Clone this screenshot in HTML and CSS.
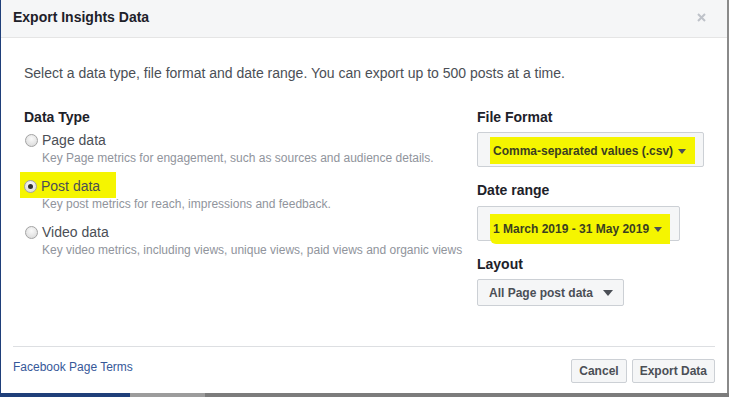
FILE: index.html
```html
<!DOCTYPE html>
<html>
<head>
<meta charset="utf-8">
<link rel="stylesheet" href="styles.css">
</head>
<body>
<div class="dialog">
  <div class="header">
    <span class="title">Export Insights Data</span>
    <svg class="close" width="9" height="9" viewBox="0 0 9 9"><path d="M1 1L8 8M8 1L1 8" stroke="#bec2c9" stroke-width="2"/></svg>
  </div>
  <div class="body">
    <p class="intro">Select a data type, file format and date range. You can export up to 500 posts at a time.</p>
    <div class="cols">
      <div class="col-left">
        <div class="heading">Data Type</div>
        <div class="option">
          <div class="opt-row"><span class="radio"></span><span class="label">Page data</span></div>
          <div class="desc">Key Page metrics for engagement, such as sources and audience details.</div>
        </div>
        <div class="option">
          <div class="opt-row"><span class="hl hl-post"><span class="radio checked"></span><span class="label">Post data</span></span></div>
          <div class="desc">Key post metrics for reach, impressions and feedback.</div>
        </div>
        <div class="option">
          <div class="opt-row"><span class="radio"></span><span class="label">Video data</span></div>
          <div class="desc">Key video metrics, including views, unique views, paid views and organic views</div>
        </div>
      </div>
      <div class="col-right">
        <div class="heading">File Format</div>
        <div class="select tall sel-format"><span class="hl hl-format">Comma-separated values (.csv)<span class="arrow small"></span></span></div>
        <div class="heading gap">Date range</div>
        <div class="select tall sel-date"><span class="hl hl-date">1 March 2019 - 31 May 2019<span class="arrow small"></span></span></div>
        <div class="heading gap">Layout</div>
        <div class="select short">All Page post data<span class="arrow"></span></div>
      </div>
    </div>
  </div>
  <div class="divider"></div>
  <div class="footer">
    <a class="terms" href="#">Facebook Page Terms</a>
    <div class="buttons">
      <button class="btn">Cancel</button>
      <button class="btn">Export Data</button>
    </div>
  </div>
</div>
</body>
</html>
```
FILE: styles.css
```css
html, body {
  margin: 0;
  padding: 0;
}
body {
  width: 729px;
  height: 397px;
  overflow: hidden;
  background: linear-gradient(to right, #1f3f7a 0 130px, #9c9c9c 130px 205px, #7c7c7c 205px);
  font-family: "Liberation Sans", Arial, sans-serif;
}
.dialog {
  width: 726px;
  height: 393px;
  margin-left: 1px;
  background: #fff;
  border-right: 2px solid #8a8a8a;
  box-sizing: content-box;
  display: flex;
  flex-direction: column;
}
.header {
  height: 37px;
  background: #f5f6f7;
  border-bottom: 1px solid #e5e5e5;
  display: flex;
  align-items: center;
  justify-content: space-between;
  padding: 0 21px 0 12px;
}
.title {
  font-size: 14px;
  font-weight: bold;
  color: #1d2129;
  margin-top: -3px;
}
.close {
  margin-top: -2px;
}
.body {
  height: 308px;
  padding: 0 0 0 23px;
  box-sizing: border-box;
}
.intro {
  margin: 26px 0 0;
  font-size: 14px;
  line-height: 18px;
  color: #4b4f56;
}
.cols {
  display: grid;
  grid-template-columns: 453px 1fr;
  margin-top: 26px;
}
.heading {
  font-size: 14px;
  font-weight: bold;
  line-height: 18px;
  color: #1d2129;
}
.heading.gap {
  margin-top: 14px;
}
.option {
  margin-top: 10px;
}
.col-left .heading + .option {
  margin-top: 5px;
}
.opt-row {
  display: flex;
  align-items: center;
  height: 18px;
}
.radio {
  width: 11px;
  height: 11px;
  border-radius: 50%;
  border: 1px solid #a3a3a3;
  background: radial-gradient(circle at 50% 35%, #fafafa, #d6d6d6);
  margin: 0 4px 0 1px;
  position: relative;
  flex: none;
}
.radio.checked::after {
  content: "";
  position: absolute;
  left: 3px;
  top: 3px;
  width: 5px;
  height: 5px;
  border-radius: 50%;
  background: #333;
}
.label {
  font-size: 14px;
  color: #4b4f56;
  line-height: 18px;
}
.desc {
  font-size: 12px;
  color: #90949c;
  line-height: 18px;
  padding-left: 18px;
  white-space: nowrap;
}
.hl {
  background: #f5f500;
}
.hl-post {
  display: inline-flex;
  align-items: center;
  padding: 5px 16px 3px 4px;
  margin: -5px 0 -3px -4px;
}
.hl-post .radio {
  margin-left: 0;
}
.select {
  background: #f5f6f7;
  border: 1px solid #ccd0d5;
  border-radius: 2px;
  font-size: 12px;
  font-weight: bold;
  color: #4b4f56;
  display: flex;
  align-items: center;
  box-sizing: border-box;
  margin-top: 6px;
}
.select.tall {
  height: 35px;
}
.select.short {
  height: 27px;
  width: 147px;
  padding-left: 11px;
  margin-top: 6px;
}
.sel-format {
  width: 227px;
  padding-left: 12px;
  margin-top: 6px;
}
.sel-date {
  width: 203px;
  padding-left: 12px;
  margin-top: 7px;
}
.hl-format {
  display: inline-flex;
  align-items: center;
  height: 27px;
  padding: 0 9px 0 3px;
  margin-top: 2px;
  color: #3b3f20;
}
.hl-date {
  display: inline-flex;
  align-items: center;
  height: 30px;
  padding: 0 8px 0 3px;
  margin-top: 10px;
  color: #3b3f20;
  border-bottom-left-radius: 6px;
}
.arrow {
  display: inline-block;
  width: 0;
  height: 0;
  border-left: 5px solid transparent;
  border-right: 5px solid transparent;
  border-top: 6px solid #4b4f56;
  margin-left: 10px;
  margin-top: 1px;
}
.arrow.small {
  border-left-width: 4px;
  border-right-width: 4px;
  border-top-width: 5px;
  margin-left: 5px;
}
.divider {
  height: 1px;
  background: #dddfe2;
  margin: 0 12px 0 12px;
}
.footer {
  display: flex;
  align-items: center;
  justify-content: space-between;
  padding: 12px 12px 10px 11px;
  flex: 1;
  box-sizing: border-box;
}
.terms {
  font-size: 12px;
  color: #365899;
  text-decoration: none;
  margin-left: 1px;
  margin-top: -8px;
}
.buttons {
  display: flex;
  gap: 5px;
}
.btn {
  height: 24px;
  padding: 0 7px;
  background: #f5f6f7;
  border: 1px solid #ccd0d5;
  border-radius: 2px;
  font-family: "Liberation Sans", Arial, sans-serif;
  font-size: 12px;
  font-weight: bold;
  color: #4b4f56;
}
```
